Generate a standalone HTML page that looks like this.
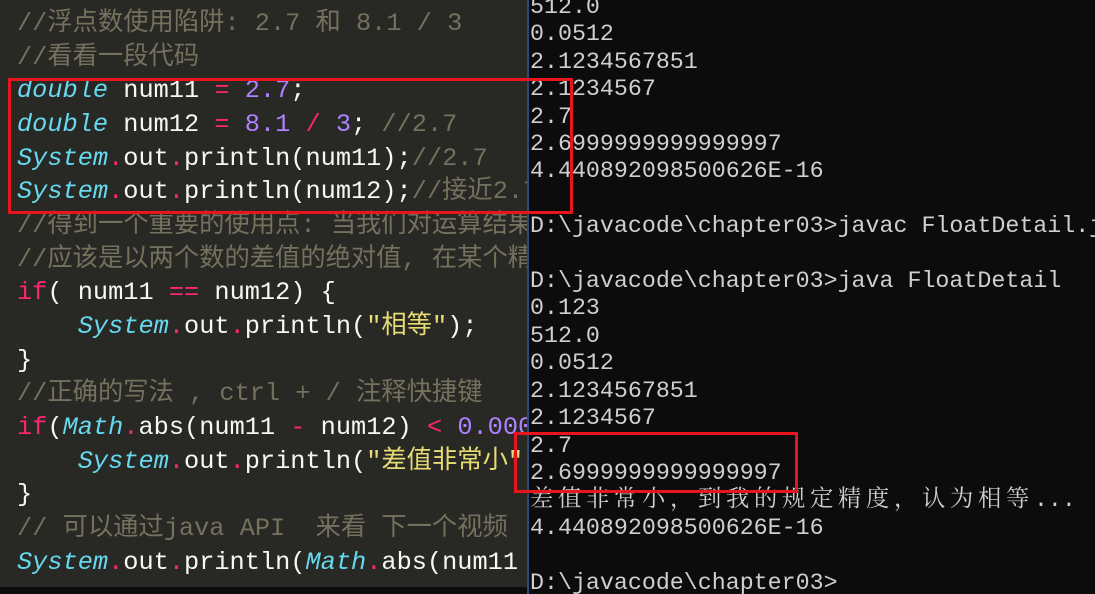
<!DOCTYPE html>
<html><head><meta charset="utf-8"><style>
*{margin:0;padding:0}
body{width:1095px;height:587px;overflow:hidden;background:#0c0c0c;position:relative}
#ed{position:absolute;left:0;top:0;width:527px;height:587px;background:#282824;overflow:hidden}
#ed pre{position:absolute;left:17px;top:7px;font-family:"Liberation Mono","Noto Sans CJK SC",monospace;font-size:25.3px;line-height:33.65px;color:#f8f8f2;white-space:pre}
.c{color:#75715e}.k{color:#66d9ef;font-style:italic}.p{color:#f92672}.n{color:#ae81ff}.s{color:#e6db74}
#con{position:absolute;left:527px;top:-6px;width:568px;height:600px;border-left:2px solid #2a4a7a;overflow:hidden}
#con pre{font-family:"Liberation Mono","Noto Serif CJK SC",monospace;font-size:23.3px;line-height:27.4px;color:#cfcfcf;white-space:pre;margin-left:1px}
.cj{letter-spacing:4.7px}
.box{position:absolute;border:3px solid #e8141e}
</style></head><body>
<div id="ed"><pre><span class="c">//浮点数使用陷阱: 2.7 和 8.1 / 3</span>
<span class="c">//看看一段代码</span>
<span class="k">double</span> num11 <span class="p">=</span> <span class="n">2.7</span>;
<span class="k">double</span> num12 <span class="p">=</span> <span class="n">8.1</span> <span class="p">/</span> <span class="n">3</span>; <span class="c">//2.7</span>
<span class="k">System</span><span class="p">.</span>out<span class="p">.</span>println(num11);<span class="c">//2.7</span>
<span class="k">System</span><span class="p">.</span>out<span class="p">.</span>println(num12);<span class="c">//接近2.7</span>
<span class="c">//得到一个重要的使用点: 当我们对运算结果</span>
<span class="c">//应该是以两个数的差值的绝对值, 在某个精度</span>
<span class="p">if</span>( num11 <span class="p">==</span> num12) {
    <span class="k">System</span><span class="p">.</span>out<span class="p">.</span>println(<span class="s">"相等"</span>);
}
<span class="c">//正确的写法 , ctrl + / 注释快捷键</span>
<span class="p">if</span>(<span class="k">Math</span><span class="p">.</span>abs(num11 <span class="p">-</span> num12) <span class="p">&lt;</span> <span class="n">0.000001</span>) {
    <span class="k">System</span><span class="p">.</span>out<span class="p">.</span>println(<span class="s">"差值非常小"</span>);
}
<span class="c">// 可以通过java API  来看 下一个视频</span>
<span class="k">System</span><span class="p">.</span>out<span class="p">.</span>println(<span class="k">Math</span><span class="p">.</span>abs(num11 - num12));</pre></div>
<div id="con"><pre>512.0
0.0512
2.1234567851
2.1234567
2.7
2.6999999999999997
4.440892098500626E-16

D:\javacode\chapter03&gt;javac FloatDetail.java

D:\javacode\chapter03&gt;java FloatDetail
0.123
512.0
0.0512
2.1234567851
2.1234567
2.7
2.6999999999999997
<span class="cj">差值非常小，到我的规定精度，认为相等</span>...
4.440892098500626E-16

D:\javacode\chapter03&gt;</pre></div>
<div class="box" style="left:8px;top:78px;width:559px;height:130px"></div>
<div class="box" style="left:514px;top:432px;width:278px;height:55px"></div>
</body></html>
